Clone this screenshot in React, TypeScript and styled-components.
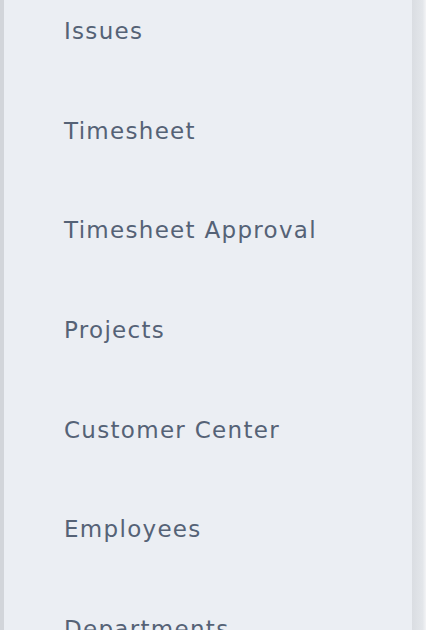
import styled, { createGlobalStyle } from "styled-components"

const Global = createGlobalStyle`
  html, body {
    margin: 0;
    padding: 0;
    background: #fff;
    overflow: hidden;
  }
`

const Page = styled.div`
  display: flex;
  width: 426px;
  height: 630px;
  overflow: hidden;
`

const Sidebar = styled.nav`
  display: flex;
  width: 412px;
  height: 630px;
  background: #ebeef3;
  border-left: 4px solid #d2d5da;
  box-sizing: border-box;
  overflow: hidden;
`

const Shade = styled.div`
  width: 14px;
  height: 630px;
  background: linear-gradient(to right, #dadde2 0%, #e3e6ea 75%, #f3f4f6 100%);
`

const List = styled.ul`
  list-style: none;
  margin: -19px 0 0;
  padding: 0;
  width: 100%;
`

const Item = styled.li`
  display: flex;
  align-items: center;
  height: 99.7px;
  padding-left: 60px;
  font-family: "DejaVu Sans", "Open Sans", sans-serif;
  font-size: 23px;
  letter-spacing: 1.3px;
  color: #556276;
  white-space: nowrap;
`

const items = [
  "Issues",
  "Timesheet",
  "Timesheet Approval",
  "Projects",
  "Customer Center",
  "Employees",
  "Departments",
]

export default function App() {
  return (
    <>
      <Global />
      <Page>
        <Sidebar>
          <List>
            {items.map((label) => (
              <Item key={label}>{label}</Item>
            ))}
          </List>
        </Sidebar>
        <Shade />
      </Page>
    </>
  )
}
